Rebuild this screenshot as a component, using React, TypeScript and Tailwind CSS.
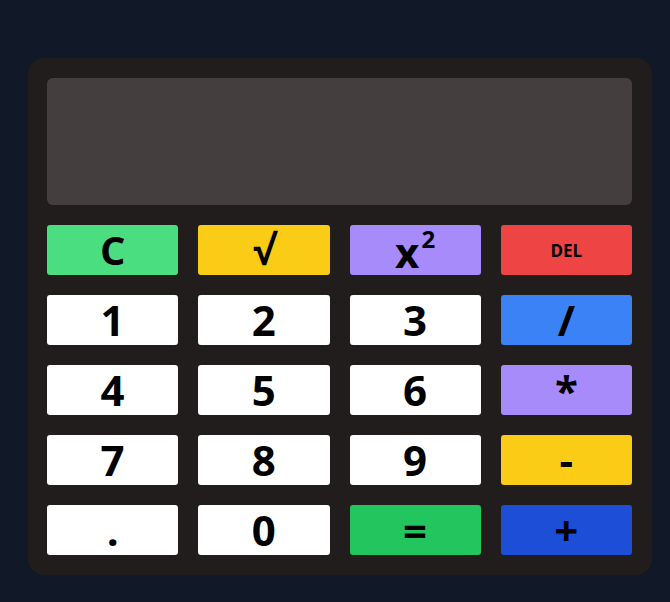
import React from 'react';

type Key = { label: React.ReactNode; cls: string };

const keys: Key[] = [
    { label: 'C', cls: 'bg-[#4ade80] text-[40px]' },
    { label: '√', cls: 'bg-[#facc15] text-[40px]' },
    {
        label: (
            <span className="relative top-[2px]">
                x<span className="relative -top-[20px] ml-[2px] text-[24px]">2</span>
            </span>
        ),
        cls: 'bg-[#a78bfa] text-[42px]',
    },
    { label: 'DEL', cls: 'bg-[#ef4444] text-[17px]' },
    { label: '1', cls: 'bg-white text-[42px]' },
    { label: '2', cls: 'bg-white text-[42px]' },
    { label: '3', cls: 'bg-white text-[42px]' },
    { label: '/', cls: 'bg-[#3b82f6] text-[42px]' },
    { label: '4', cls: 'bg-white text-[42px]' },
    { label: '5', cls: 'bg-white text-[42px]' },
    { label: '6', cls: 'bg-white text-[42px]' },
    { label: '*', cls: 'bg-[#a78bfa] text-[42px]' },
    { label: '7', cls: 'bg-white text-[42px]' },
    { label: '8', cls: 'bg-white text-[42px]' },
    { label: '9', cls: 'bg-white text-[42px]' },
    { label: '-', cls: 'bg-[#facc15] text-[42px]' },
    { label: '.', cls: 'bg-white text-[42px]' },
    { label: '0', cls: 'bg-white text-[42px]' },
    { label: '=', cls: 'bg-[#22c55e] text-[42px]' },
    { label: '+', cls: 'bg-[#1d4ed8] text-[42px]' },
];

export default function App() {
    return (
        <div className="min-h-screen bg-[#111827] pt-[58px] pl-[28px]" style={{ fontFamily: '"Open Sans", sans-serif' }}>
            <div className="w-[624px] rounded-2xl bg-[#221d1d] pt-[20px] pb-[20px] pl-[19px] pr-[20px]">
                <div className="h-[127px] rounded-md bg-[#443e3e]" />
                <div className="mt-[20px] grid grid-cols-4 gap-x-[20px] gap-y-[20px]">
                    {keys.map((k, i) => (
                        <button
                            key={i}
                            className={`h-[50px] rounded-[3px] flex items-center justify-center font-bold text-black leading-none ${k.cls}`}
                        >
                            {k.label}
                        </button>
                    ))}
                </div>
            </div>
        </div>
    );
}
